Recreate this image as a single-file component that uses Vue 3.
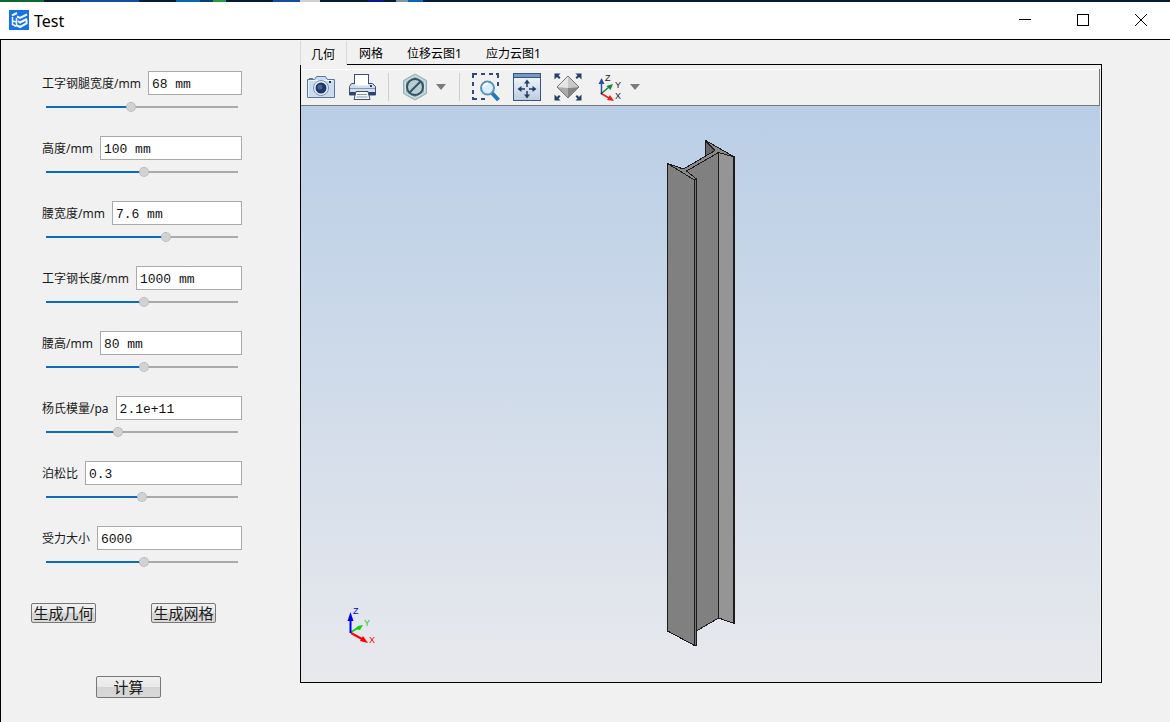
<script setup>
import { ref, reactive } from 'vue'

const fields = reactive([
  { id: 'flange', label: '工字钢腿宽度/mm', value: '68 mm', pos: 44 },
  { id: 'height', label: '高度/mm', value: '100 mm', pos: 51 },
  { id: 'web', label: '腰宽度/mm', value: '7.6 mm', pos: 63 },
  { id: 'length', label: '工字钢长度/mm', value: '1000 mm', pos: 51 },
  { id: 'waist', label: '腰高/mm', value: '80 mm', pos: 51 },
  { id: 'young', label: '杨氏模量/pa', value: '2.1e+11', pos: 37 },
  { id: 'poisson', label: '泊松比', value: '0.3', pos: 50 },
  { id: 'force', label: '受力大小', value: '6000', pos: 51 }
])
const tabs = ['几何', '网格', '位移云图1', '应力云图1']
const active = ref(0)
</script>

<template>
  <div class="window">
    <div class="strip"></div>
    <header class="titlebar">
      <svg class="logo" width="20" height="20" viewBox="0 0 20 20">
        <rect width="20" height="20" fill="#1673e6" />
        <g fill="none" stroke="#f4f8ff">
          <path d="M3 5.500 8 3" stroke-width="2" />
          <path d="M3.500 7v7.500l4 2M3.500 11l4 1M7.500 8v8" stroke-width="1.500" />
          <path d="M8 6.500 11 8 18 4.500M9 11l2 1.500 7-3.500M8 15.500l3 1.500 6.500-3.500V10" stroke-width="2" />
        </g>
      </svg>
      <h1>Test</h1>
      <div class="controls">
        <button aria-label="最小化"><svg width="12" height="12" viewBox="0 0 12 12"><path d="M0 5.500h12" /></svg></button>
        <button aria-label="最大化"><svg width="12" height="12" viewBox="0 0 12 12"><path d="M.5.5h11v11H.5z" /></svg></button>
        <button aria-label="关闭"><svg class="smooth" width="12" height="12" viewBox="0 0 12 12"><path d="M0 0l12 12M12 0 0 12" /></svg></button>
      </div>
    </header>

    <main class="body">
      <form class="sidebar" @submit.prevent>
        <div class="fields">
          <div v-for="f in fields" :key="f.id" class="field">
            <div class="line">
              <label :for="f.id">{{ f.label }}</label>
              <input :id="f.id" v-model="f.value" type="text" class="box" />
            </div>
            <input
              v-model="f.pos"
              type="range"
              min="0"
              max="100"
              class="slider"
              :aria-label="f.label"
              :style="{ '--fill': f.pos + '%' }"
            />
          </div>
        </div>
        <div class="actions">
          <button type="button" class="push">生成几何</button>
          <button type="button" class="push">生成网格</button>
        </div>
        <div class="compute">
          <button type="submit" class="push tall">计算</button>
        </div>
      </form>

      <section class="viewer">
        <nav class="tabs" role="tablist">
          <button
            v-for="(t, i) in tabs"
            :key="t"
            role="tab"
            class="tab"
            :class="{ on: i === active }"
            :aria-selected="i === active"
            @click="active = i"
          >{{ t }}</button>
          <span class="rest"></span>
        </nav>
        <div class="panel">
          <div class="toolbar">
            <div class="group">
              <button class="tool" aria-label="截图">
                <svg width="28" height="28" viewBox="0 0 28 28">
                  <path d="M.5 6.500h7l2-3h9l2 3h7v18H.5z" fill="#c9dcf1" stroke="#5b7699" />
                  <path d="M2 7.500h24M1.500 8v16" stroke="#eef5fd" fill="none" />
                  <path d="M2 5.500h4M10 3.500h8" stroke="#5b7699" />
                  <circle cx="14" cy="15" r="7.500" fill="#eaf2fb" stroke="#7991b0" />
                  <circle cx="14" cy="15" r="5.500" fill="#1c3768" />
                  <circle cx="13" cy="14" r="2.500" fill="#456795" />
                  <rect x="22" y="8" width="2" height="2" fill="#1c3768" />
                </svg>
              </button>
              <button class="tool" aria-label="打印">
                <svg width="28" height="28" viewBox="0 0 28 28">
                  <rect x="6.500" y="1.500" width="14" height="10" fill="#fff" stroke="#3c4f70" />
                  <path d="M3.500 10.500h21l3 3v8.500h-26v-8.500z" fill="#d3deeb" stroke="#3c4f70" />
                  <path d="M7 9.500h13v3H7z" fill="#fff" />
                  <path d="M2 15.500h25" stroke="#8398b3" />
                  <path d="M2 20.500h25" stroke="#29446f" stroke-width="3" />
                  <path d="M8 18.500h12l2 8H6z" fill="#f8fafc" stroke="#3c4f70" />
                  <path d="M9 21.500h10M8.500 24h11" stroke="#8798ae" />
                  <rect x="22" y="12" width="2" height="2" fill="#29446f" />
                </svg>
              </button>
            </div>
            <i class="sep"></i>
            <div class="pair">
              <button class="tool" aria-label="剪裁">
                <svg width="28" height="28" viewBox="0 0 28 28">
                  <path d="M14 1 25.500 7.500v13L14 27 2.500 20.500v-13z" fill="#b7cfd3" stroke="#93adb2" />
                  <path d="M14 3 23.500 8.500v11L14 25 4.500 19.500v-11z" fill="#91aeb3" stroke="#d6e4e5" />
                  <circle cx="14" cy="14" r="8" fill="#b8ced1" stroke="#345365" stroke-width="2" />
                  <path d="M8.500 19.500 19.500 8.500" stroke="#345365" stroke-width="2" />
                </svg>
              </button>
              <button class="drop" aria-label="剪裁选项"><svg width="12" height="6" viewBox="0 0 12 6"><path d="M1 0h10L6 6z" fill="#7b7b7b" /></svg></button>
            </div>
            <i class="sep"></i>
            <div class="group">
              <button class="tool" aria-label="框选缩放">
                <svg width="28" height="28" viewBox="0 0 28 28">
                  <path d="M1 5V1h4M9 1h4M17 1h4M24 1h2v4M26 9v4M1 9v4M1 17v4M1 24v2h4M9 26h4" fill="none" stroke="#314b77" stroke-width="2" />
                  <path d="m20 20 6.500 7" stroke="#2379b5" stroke-width="4" />
                  <circle cx="15.500" cy="15" r="6.500" fill="#d7efff" stroke="#5e93b9" stroke-width="2" />
                  <path d="M11.500 14q1-3.500 4.500-3.500" fill="none" stroke="#fff" stroke-width="2" />
                </svg>
              </button>
              <button class="tool" aria-label="适应窗口">
                <svg width="28" height="28" viewBox="0 0 28 28">
                  <defs><linearGradient id="win" x2="0" y2="1"><stop stop-color="#f6f9fd" /><stop offset="1" stop-color="#bccce0" /></linearGradient></defs>
                  <rect x=".5" y=".5" width="27" height="27" fill="url(#win)" stroke="#38547f" />
                  <path d="M1 1h26v3H1z" fill="#7897c2" /><path d="M1 4.500h26" stroke="#38547f" />
                  <path d="M14 9v5M14 18v5M7 16h5M16 16h5" stroke="#223d68" stroke-width="1.500" />
                  <path d="m14 6.500 3 4h-6zM14 25.500l3-4h-6zM4.500 16l4-3v6zM23.500 16l-4-3v6z" fill="#223d68" />
                </svg>
              </button>
              <button class="tool" aria-label="缩放到全部">
                <svg width="28" height="28" viewBox="0 0 28 28">
                  <path d="M14 3v12L3 14z" fill="#e5e5e5" /><path d="M14 3v12l11-1z" fill="#c8c8c8" />
                  <path d="m3 14 11 1v10z" fill="#aaa" /><path d="m14 15 11-1-11 11z" fill="#858585" />
                  <path d="m14 3 11 11-11 11L3 14z" fill="none" stroke="#777" />
                  <g fill="#263f69"><path d="M.5.500h6l-2 2 2 2L5 6 3 4l-2.500 2.500zM27.500.500v6L25 4l-2 2-1.500-1.500 2-2-2-2zM.5 27.500v-6L3 24l2-2 1.500 1.500-2 2 2 2zM27.500 27.500h-6l2-2-2-2L23 22l2 2 2.500-2.500z" /></g>
                </svg>
              </button>
            </div>
            <div class="pair axes">
              <button class="tool" aria-label="视图方向">
                <svg width="28" height="28" viewBox="0 0 28 28">
                  <path d="M4.500 20V9" stroke="#244eaa" stroke-width="1.500" /><path d="m4.500 5 3 6h-6z" fill="#244eaa" />
                  <path d="m5 20 7-6" stroke="#15853a" stroke-width="1.500" /><path d="m16 11-2.500 6-4-4z" fill="#15853a" />
                  <path d="m5 21 7 4" stroke="#e42222" stroke-width="1.500" /><path d="m17 28-7-1 3-5z" fill="#e42222" />
                  <circle cx="4.500" cy="20.500" r="1" fill="#222" />
                  <g class="mark"><text x="8" y="8">Z</text><text x="18" y="15">Y</text><text x="18" y="26">X</text></g>
                </svg>
              </button>
              <button class="drop" aria-label="视图选项"><svg width="12" height="6" viewBox="0 0 12 6"><path d="M1 0h10L6 6z" fill="#7b7b7b" /></svg></button>
            </div>
          </div>

          <div class="scene">
            <svg class="beam" width="67" height="508" viewBox="0 0 67 508" role="img" aria-label="工字钢模型">
              <g stroke="#1c1c1c" stroke-linejoin="round">
                <path d="M38.500 1.500V17L48 10.500z" fill="#686868" />
                <path d="M19.500 31 51.500 12.500V478L29.500 491V39z" fill="#808080" />
                <path d="M51.500 12.500 67.500 17V483.500L51.500 478z" fill="#959595" />
                <path d="M38.500.5 67.500 17 51.500 12.500 19.500 31 29.500 39 27.500 40 .5 23.500 16.500 29 48 10.500z" fill="#8a8a8a" />
                <path d="M.5 23.500 27.500 40V505.500L.5 491z" fill="#808080" />
                <path d="M27.500 40 29.500 39V505L27.500 505.500z" fill="#777" />
                <path d="M67 17V483.500" stroke-width="2" />
              </g>
            </svg>
            <svg class="triad" width="34" height="44" viewBox="0 0 34 44" aria-hidden="true">
              <path d="m6 29 7-4" stroke="#0fd20f" stroke-width="2" /><path d="m18 22-3 5-5-1 3-3z" fill="#0fd20f" />
              <path d="m6 30 11 6" stroke="#f00" stroke-width="2" /><path d="m23 40-8-2 3-5z" fill="#f00" />
              <path d="M5.500 30V14" stroke="#0000f0" stroke-width="2" /><path d="m5.500 9 3 9h-6z" fill="#0000f0" />
              <g class="letters"><text x="8" y="11" fill="#0000f0">Z</text><text x="19" y="23" fill="#0fd20f">Y</text><text x="24" y="40" fill="#f00">X</text></g>
            </svg>
          </div>
        </div>
      </section>
    </main>
  </div>
</template>

<style>
body { margin: 0; background: #f1f1f1; }
</style>

<style scoped>
.window {
  min-height: 100vh;
  display: flex;
  flex-direction: column;
  background: #f1f1f1;
  color: #1a1a1a;
  font-family: "Noto Sans", "Noto Sans CJK SC", sans-serif;
}
.window * { box-sizing: border-box; }
button {
  margin: 0;
  padding: 0;
  border: 0;
  background: none;
  color: inherit;
  font-family: inherit;
}
svg { display: block; }
.strip {
  height: 2px;
  background: linear-gradient(90deg, #08682f 0 44px, #041a35 44px 80px, #134ba5 80px 139px, #041a35 139px 176px, #0867b8 176px 200px, #063c72 200px 213px, #279b43 213px 226px, #041a35 226px 273px, #134ba5 273px 300px, #d0d0d0 300px 320px, #041a35 320px 368px, #061b88 368px 384px, #041a35 384px 396px, #8292a5 396px 408px, #0867b8 408px 423px, #041a35 423px);
}
.titlebar {
  height: 38px;
  display: flex;
  align-items: center;
  padding-left: 9px;
  background: #fff;
  border-bottom: 1px solid #000;
}
.logo { margin-bottom: 1px; }
h1 {
  margin: 0 auto 0 5px;
  font-size: 16px;
  font-weight: 400;
  line-height: 20px;
  color: #000;
}
.controls { display: flex; align-self: stretch; padding-bottom: 1px; }
.controls button { width: 58px; display: grid; place-items: center; }
.controls path { fill: none; stroke: #000; shape-rendering: crispEdges; }
.controls .smooth path { shape-rendering: auto; }

.body { flex: 1; display: flex; border-left: 1px solid #000; }
.sidebar { width: 299px; flex: none; padding: 31px 58px 0 30px; }
.fields { display: grid; grid-template-columns: minmax(0, 1fr); gap: 21px; padding-left: 11px; }
.line { display: flex; align-items: center; gap: 7px; height: 24px; }
label { padding-top: 2px; font-size: 12px; line-height: 24px; white-space: nowrap; }
.box {
  flex: 1;
  min-width: 0;
  height: 24px;
  padding: 2px 3px 0;
  border: 1px solid #aaa;
  border-radius: 0;
  background: #fff;
  color: #111;
  font: 13px "Liberation Mono", monospace;
}
.slider {
  appearance: none;
  display: block;
  width: 192px;
  height: 10px;
  margin: 7px 4px 3px;
  background: linear-gradient(90deg, #0b6cbd var(--fill), #aaa var(--fill)) center / 100% 2px no-repeat;
}
.slider::-webkit-slider-thumb {
  appearance: none;
  width: 10px;
  height: 10px;
  border: 1px dotted #aaa;
  border-radius: 50%;
  background: #d2d2d2;
}
.actions { display: flex; gap: 55px; margin-top: 33px; }
.compute { margin: 53px 0 0 65px; }
.push {
  width: 65px;
  height: 20px;
  flex: none;
  border: 1px solid #777;
  border-radius: 2px;
  background: linear-gradient(#f0f0f0, #e8e8e8 50%, #d4d4d4 50%, #d8d8d8);
  font-size: 15px;
  line-height: 18px;
  white-space: nowrap;
  display: flex;
  align-items: center;
  justify-content: center;
}
.tall { height: 22px; }

.viewer { flex: 1; min-width: 0; display: flex; flex-direction: column; margin: 0 68px 39px 0; }
.tabs { display: flex; height: 25px; padding-top: 1px; }
.tab {
  padding: 3px 12px 0;
  border-bottom: 1px solid #000;
  font-size: 12px;
  line-height: 20px;
  color: #000;
}
.tab.on { padding: 3px 11px 0 10px; border: solid #d9d9d9; border-width: 0 1px; }
.rest { flex: 1; border-bottom: 1px solid #000; }
.panel { flex: 1; display: flex; flex-direction: column; border: 1px solid #000; border-top: 0; padding-top: 4px; }
.toolbar {
  display: flex;
  align-items: center;
  height: 37px;
  margin-right: 1px;
  padding-left: 6px;
  border: solid #777;
  border-width: 0 1px 1px 0;
  box-shadow: inset 0 1px #fff;
}
.group { display: flex; gap: 13px; }
.pair { display: flex; align-items: center; gap: 6px; }
.axes { margin-left: 15px; gap: 4px; }
.tool { width: 28px; height: 28px; }
.drop { height: 28px; width: 12px; display: grid; place-items: center; }
.sep { width: 1px; height: 28px; margin: 0 12px; background: #cfcfcf; }
.mark { font: 9px "Liberation Sans", sans-serif; fill: #222; }

.scene {
  flex: 1;
  position: relative;
  display: grid;
  place-items: center;
  margin-right: 1px;
  background: linear-gradient(#b9cee6, #e8e9ed);
}
.beam { overflow: visible; shape-rendering: crispEdges; }
.triad { position: absolute; left: 44px; bottom: 35px; }
.letters { font: 9px "Liberation Sans", sans-serif; }
</style>
